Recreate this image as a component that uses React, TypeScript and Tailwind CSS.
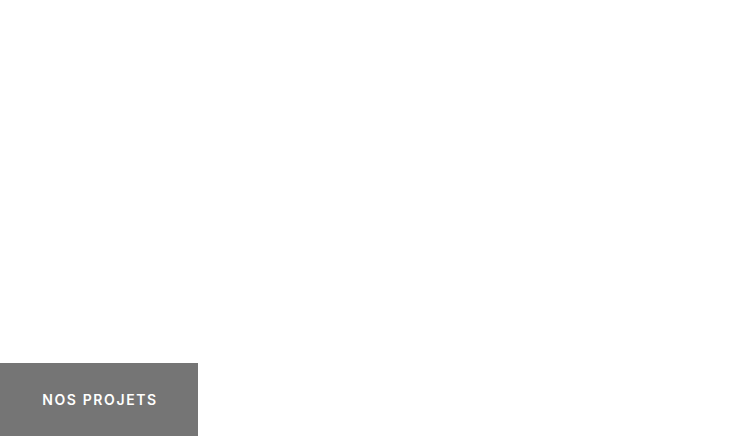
import React from 'react';

const App: React.FC = () => {
  return (
    <div className="h-[436px] w-full bg-white flex flex-col justify-end overflow-hidden">
      <a
        href="#projets"
        className="w-[198px] h-[73px] bg-[#757575] flex items-center justify-center pl-[2px] text-white text-[14px] font-semibold tracking-[0.115em] uppercase"
        style={{ fontFamily: 'Inter, "Noto Sans", sans-serif' }}
      >
        Nos projets
      </a>
    </div>
  );
};

export default App;
